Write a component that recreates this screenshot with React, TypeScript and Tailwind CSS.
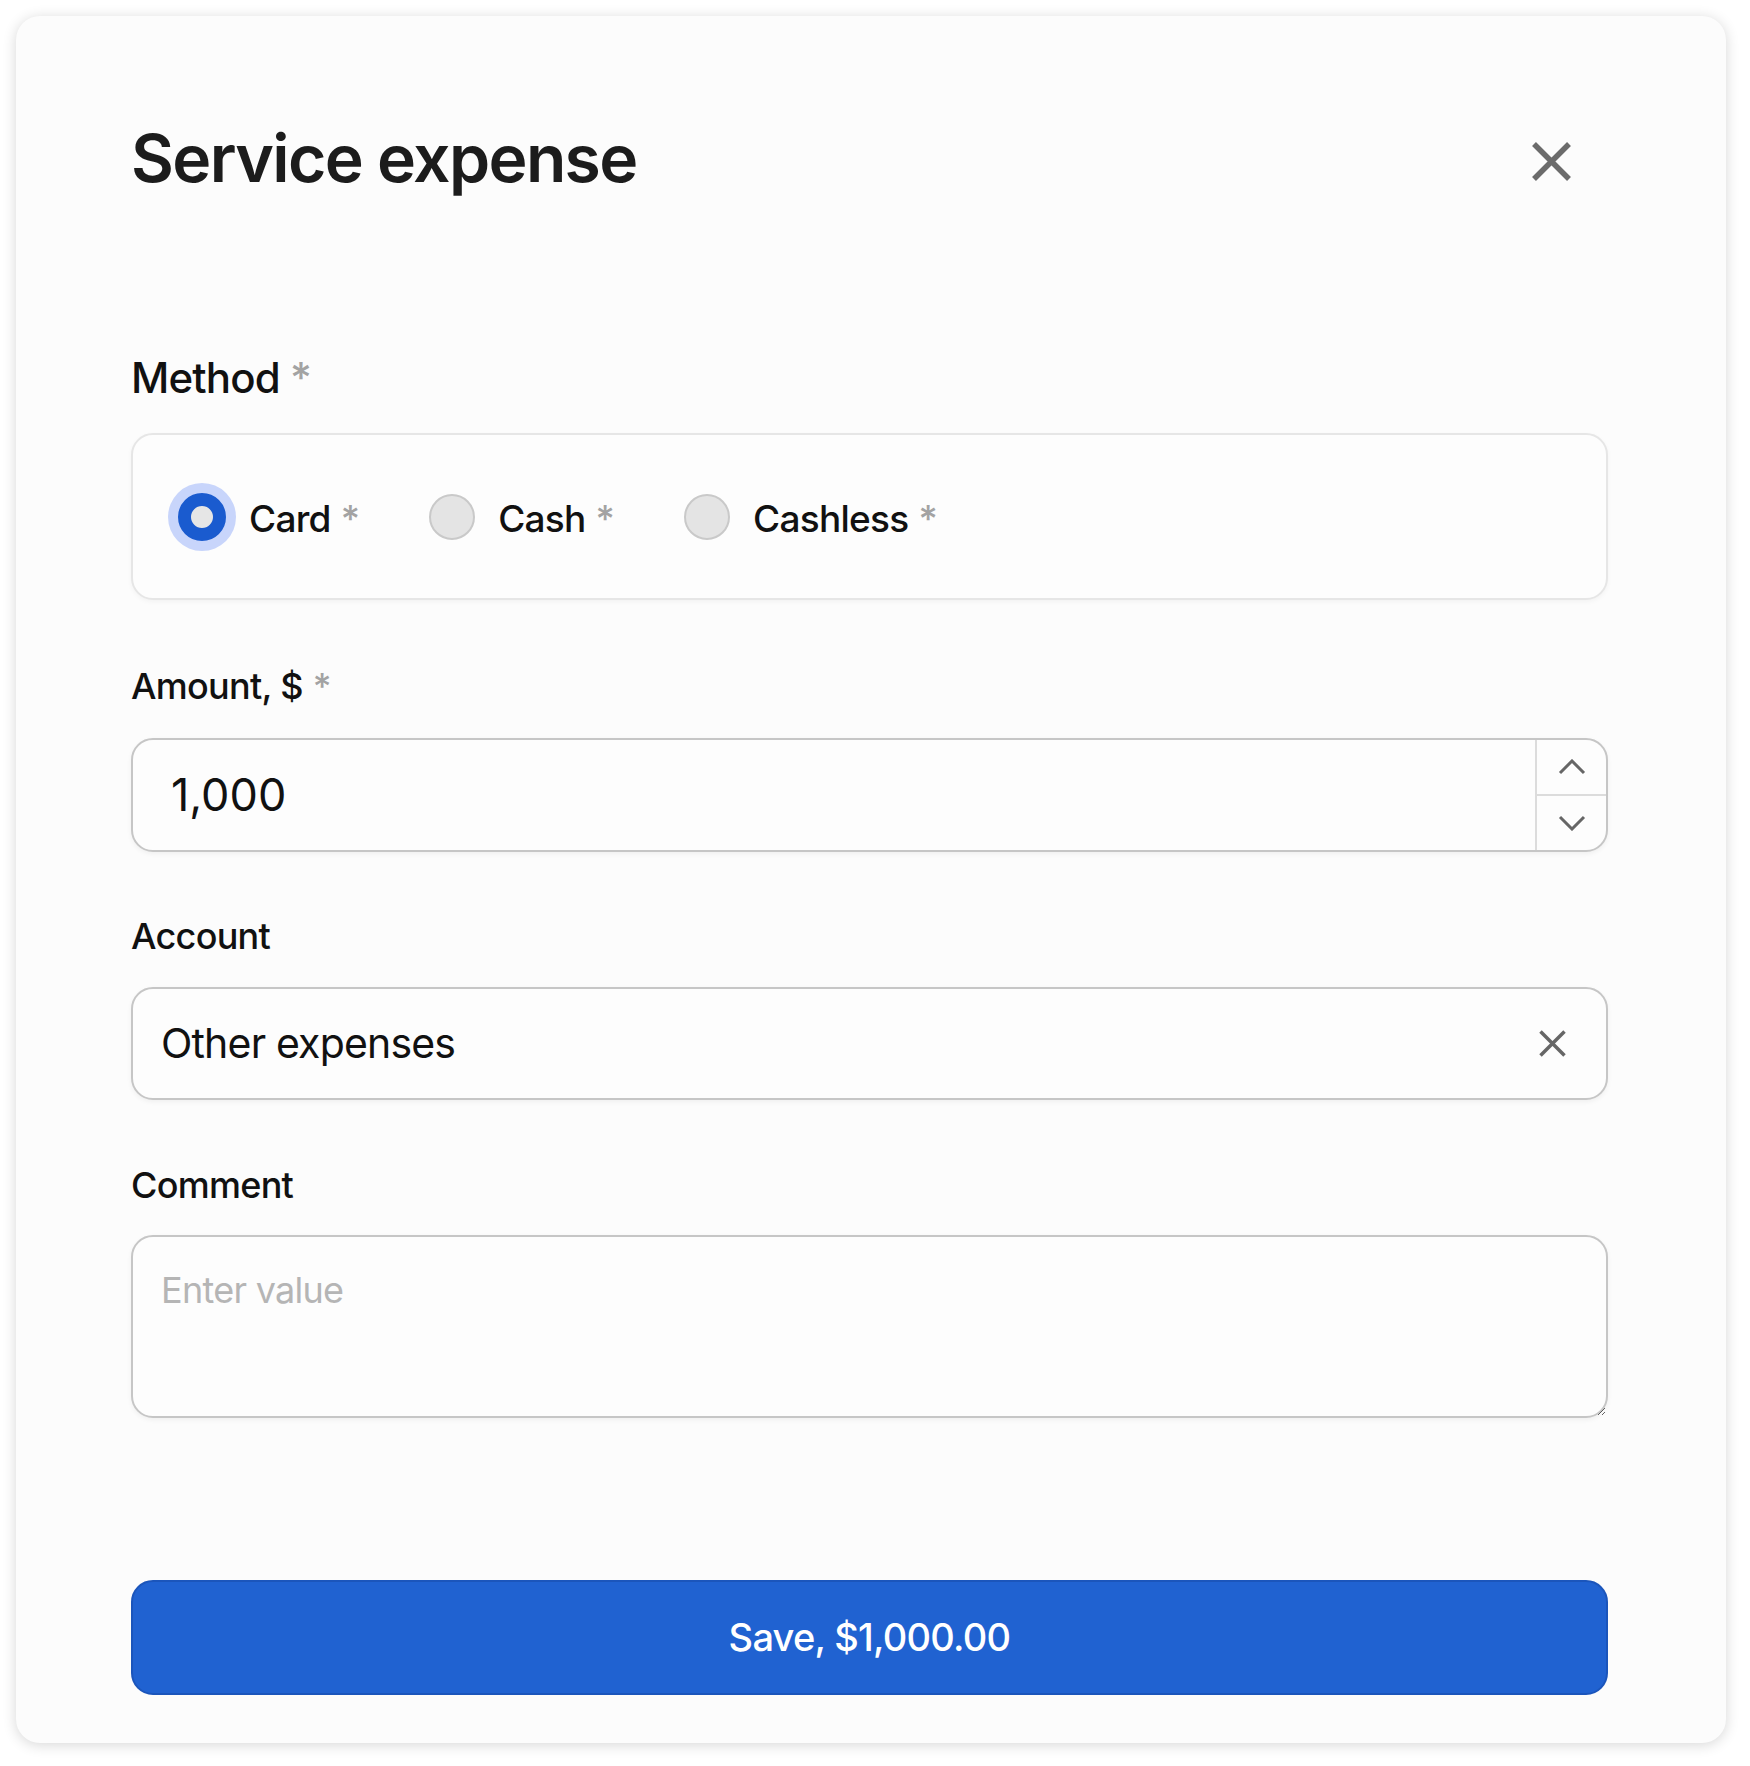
import { useState } from 'react';

const font = { fontFamily: 'Inter, "Liberation Sans", sans-serif' };

function Star() {
  return <span className="ml-[10px] text-[#a3a3a3]">*</span>;
}

function Radio({ label, checked, onClick }: { label: string; checked: boolean; onClick: () => void }) {
  return (
    <button type="button" onClick={onClick} className="flex items-center gap-[23px]">
      {checked ? (
        <span className="w-[48px] h-[48px] rounded-full border-[13px] border-[#1a5bcf] bg-[#e6e6e6] shadow-[0_0_0_10px_#c8d5fb]" />
      ) : (
        <span className="w-[46px] h-[46px] rounded-full border-2 border-[#c9c9c9] bg-[#e4e4e4]" />
      )}
      <span className="text-[37px] leading-[44px] font-medium text-[#111] tracking-[-0.02em] mt-[4px]">
        {label}
        <Star />
      </span>
    </button>
  );
}

function Label({ children, required, big }: { children: string; required?: boolean; big?: boolean }) {
  return (
    <div
      className={
        big
          ? 'text-[42px] leading-[44px] font-medium text-[#111] tracking-[-0.02em]'
          : 'text-[36px] leading-[44px] font-medium text-[#111] tracking-[-0.02em]'
      }
    >
      {children}
      {required && <Star />}
    </div>
  );
}

export default function App() {
  const [method, setMethod] = useState('Card');

  return (
    <div className="min-h-screen bg-white pt-[16px] pl-[16px]" style={font}>
      <div className="w-[1710px] rounded-[24px] bg-[#fcfcfc] pt-[102px] pb-[48px] pl-[115px] pr-[118px] shadow-[0_2px_14px_rgba(0,0,0,0.16)]">
        <div className="flex items-start justify-between h-[80px]">
          <h1 className="text-[66px] leading-[80px] font-semibold text-[#1c1c1c] tracking-[-0.025em]">Service expense</h1>
          <button type="button" className="mt-[24px] mr-[37px] text-[#6b6b6b]">
            <svg width="39" height="39" viewBox="0 0 39 39" fill="none" stroke="currentColor" strokeWidth="5.5">
              <path d="M2 2L37 37M37 2L2 37" />
            </svg>
          </button>
        </div>

        <div className="mt-[158px] flex flex-col">
          <div className="flex flex-col gap-[33px]">
            <Label required big>Method</Label>
            <div className="h-[167px] rounded-[22px] border-2 border-[#e6e6e6] bg-[#fdfdfd] shadow-[0_2px_5px_rgba(0,0,0,0.04)] flex items-center pl-[45px] gap-[70px]">
              {['Card', 'Cash', 'Cashless'].map((m) => (
                <Radio key={m} label={m} checked={method === m} onClick={() => setMethod(m)} />
              ))}
            </div>
          </div>

          <div className="mt-[64px] flex flex-col gap-[30px]">
            <Label required>Amount, $</Label>
            <div className="h-[114px] rounded-[22px] border-2 border-[#c6c6c6] bg-[#fdfdfd] shadow-[0_2px_5px_rgba(0,0,0,0.05)] flex overflow-hidden">
              <input
                defaultValue="1,000"
                className="flex-1 min-w-0 bg-transparent pl-[38px] text-[45px] text-[#111] outline-none"
              />
              <div className="w-[71px] border-l-2 border-[#dcdcdc] flex flex-col text-[#666]">
                <button type="button" className="flex-1 flex items-center justify-center border-b-2 border-[#dcdcdc]">
                  <svg width="28" height="16" viewBox="0 0 28 16" fill="none" stroke="currentColor" strokeWidth="3">
                    <path d="M2 14L14 2L26 14" />
                  </svg>
                </button>
                <button type="button" className="flex-1 flex items-center justify-center">
                  <svg width="28" height="16" viewBox="0 0 28 16" fill="none" stroke="currentColor" strokeWidth="3">
                    <path d="M2 2L14 14L26 2" />
                  </svg>
                </button>
              </div>
            </div>
          </div>

          <div className="mt-[62px] flex flex-col gap-[29px]">
            <Label>Account</Label>
            <div className="h-[113px] rounded-[22px] border-2 border-[#c6c6c6] bg-[#fdfdfd] shadow-[0_2px_5px_rgba(0,0,0,0.05)] flex items-center pl-[28px] pr-[40px]">
              <span className="flex-1 text-[41px] text-[#111] tracking-[-0.02em]">Other expenses</span>
              <svg width="27" height="27" viewBox="0 0 27 27" fill="none" stroke="#666" strokeWidth="3.5">
                <path d="M1.5 1.5L25.5 25.5M25.5 1.5L1.5 25.5" />
              </svg>
            </div>
          </div>

          <div className="mt-[63px] flex flex-col gap-[28px]">
            <Label>Comment</Label>
            <textarea
              placeholder="Enter value"
              className="h-[183px] rounded-[22px] border-2 border-[#c6c6c6] bg-[#fdfdfd] shadow-[0_2px_5px_rgba(0,0,0,0.05)] pl-[28px] pt-[26px] text-[36px] text-[#111] placeholder:text-[#b5b5b5] outline-none tracking-[-0.02em]"
            />
          </div>
        </div>

        <button
          type="button"
          className="mt-[162px] w-full h-[115px] rounded-[22px] bg-[#2062d1] border-2 border-[#1b55bb] text-white text-[38px] font-medium tracking-[-0.02em]"
        >
          Save, $1,000.00
        </button>
      </div>
    </div>
  );
}
